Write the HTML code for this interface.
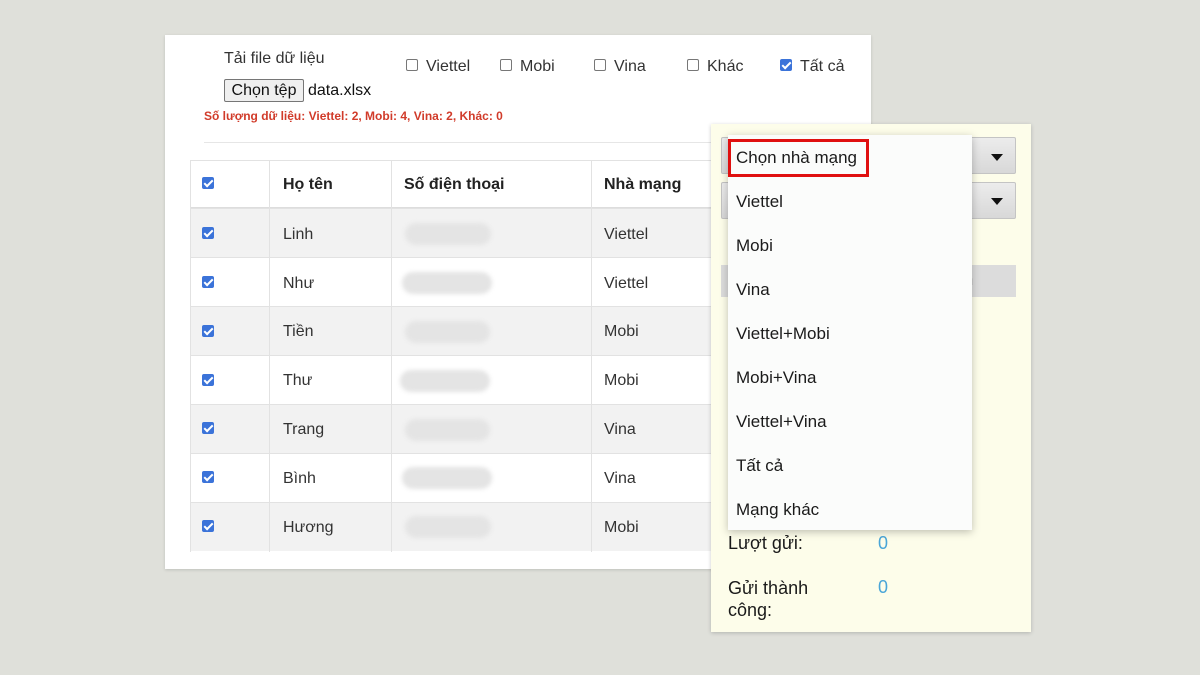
<!DOCTYPE html>
<html><head><meta charset="utf-8"><style>
*{margin:0;padding:0;box-sizing:border-box}
body{width:1200px;height:675px;background:#dfe0da;position:relative;overflow:hidden;font-family:"Liberation Sans","DejaVu Sans",sans-serif;color:#222}
.a{position:absolute}
.card{left:165px;top:35px;width:706px;height:534px;background:#fff;box-shadow:0 1px 3px rgba(0,0,0,.15)}
.t{font-size:16px;color:#333;white-space:nowrap}
.cb{width:12px;height:12px;border:1px solid #777;border-radius:2px;background:#fff}
.cbc{width:12px;height:12px;border-radius:2px;background:#3b73d9}
.cbc::after{content:"";position:absolute;left:4px;top:1px;width:3px;height:7px;border:solid #fff;border-width:0 2px 2px 0;transform:rotate(45deg)}
.row{left:190px;width:521px;height:49px;border-top:1px solid #e2e2e2}
.vl{width:1px;background:#e2e2e2;top:160px;height:392px}
.blur{height:22px;border-radius:11px;background:#e4e4e4;filter:blur(2px)}
.panel{left:711px;top:124px;width:320px;height:508px;background:#fdfdea;box-shadow:0 1px 4px rgba(0,0,0,.2)}
.sel{left:721px;width:295px;height:37px;background:linear-gradient(#ececec,#d8d8d8);border:1px solid #c4c4c4;border-radius:2px}
.arr{width:0;height:0;border-left:6px solid transparent;border-right:6px solid transparent;border-top:7px solid #111}
.menu{left:728px;top:135px;width:244px;height:395px;background:#fbfcfb;box-shadow:0 2px 8px rgba(0,0,0,.25)}
.mi{left:8px;font-size:17px;color:#1a1a1a;white-space:nowrap}
</style></head><body>
<div class="a card"></div>
<div class="a t" style="left:224px;top:50px">Tải file dữ liệu</div>
<div class="a" style="left:224px;top:79px;width:80px;height:23px;background:#efefef;border:1px solid #767676;border-radius:2px;font-size:16px;text-align:center;line-height:21px;color:#111">Chọn tệp</div>
<div class="a t" style="left:308px;top:82px;color:#111">data.xlsx</div>
<div class="a" style="left:204px;top:109px;font-size:12px;font-weight:bold;color:#d13b2a;white-space:nowrap">Số lượng dữ liệu: Viettel: 2, Mobi: 4, Vina: 2, Khác: 0</div>
<div class="a cb" style="left:406px;top:59px"></div><div class="a t" style="left:426px;top:58px">Viettel</div>
<div class="a cb" style="left:500px;top:59px"></div><div class="a t" style="left:520px;top:58px">Mobi</div>
<div class="a cb" style="left:594px;top:59px"></div><div class="a t" style="left:614px;top:58px">Vina</div>
<div class="a cb" style="left:687px;top:59px"></div><div class="a t" style="left:707px;top:58px">Khác</div>
<div class="a cbc" style="left:780px;top:59px"></div><div class="a t" style="left:800px;top:58px">Tất cả</div>
<div class="a" style="left:204px;top:142px;width:667px;height:1px;background:#e6e6e6"></div>

<div class="a row" style="top:160px;height:48px;border-bottom:1px solid #ddd"></div>
<div class="a row" style="top:208px;background:#f2f2f2"></div>
<div class="a row" style="top:257px"></div>
<div class="a row" style="top:306px;background:#f2f2f2"></div>
<div class="a row" style="top:355px"></div>
<div class="a row" style="top:404px;background:#f2f2f2"></div>
<div class="a row" style="top:453px"></div>
<div class="a row" style="top:502px;background:#f2f2f2"></div>
<div class="a vl" style="left:190px"></div><div class="a vl" style="left:269px"></div><div class="a vl" style="left:391px"></div><div class="a vl" style="left:591px"></div>
<div class="a cbc" style="left:202px;top:177px"></div>
<div class="a t" style="left:283px;top:176px;font-weight:bold;color:#222">Họ tên</div>
<div class="a t" style="left:404px;top:176px;font-weight:bold;color:#222">Số điện thoại</div>
<div class="a t" style="left:604px;top:176px;font-weight:bold;color:#222">Nhà mạng</div>

<div class="a cbc" style="left:202px;top:227px"></div><div class="a t" style="left:283px;top:226px">Linh</div><div class="a blur" style="left:405px;top:223px;width:86px"></div><div class="a t" style="left:604px;top:226px">Viettel</div>
<div class="a cbc" style="left:202px;top:276px"></div><div class="a t" style="left:283px;top:275px">Như</div><div class="a blur" style="left:402px;top:272px;width:90px"></div><div class="a t" style="left:604px;top:275px">Viettel</div>
<div class="a cbc" style="left:202px;top:325px"></div><div class="a t" style="left:283px;top:323px">Tiền</div><div class="a blur" style="left:405px;top:321px;width:85px"></div><div class="a t" style="left:604px;top:323px">Mobi</div>
<div class="a cbc" style="left:202px;top:374px"></div><div class="a t" style="left:283px;top:372px">Thư</div><div class="a blur" style="left:400px;top:370px;width:90px"></div><div class="a t" style="left:604px;top:372px">Mobi</div>
<div class="a cbc" style="left:202px;top:422px"></div><div class="a t" style="left:283px;top:421px">Trang</div><div class="a blur" style="left:405px;top:419px;width:85px"></div><div class="a t" style="left:604px;top:421px">Vina</div>
<div class="a cbc" style="left:202px;top:471px"></div><div class="a t" style="left:283px;top:470px">Bình</div><div class="a blur" style="left:402px;top:467px;width:90px"></div><div class="a t" style="left:604px;top:470px">Vina</div>
<div class="a cbc" style="left:202px;top:520px"></div><div class="a t" style="left:283px;top:519px">Hương</div><div class="a blur" style="left:405px;top:516px;width:86px"></div><div class="a t" style="left:604px;top:519px">Mobi</div>

<div class="a panel"></div>
<div class="a sel" style="top:137px"></div><div class="a arr" style="left:991px;top:154px"></div>
<div class="a sel" style="top:182px"></div><div class="a arr" style="left:991px;top:198px"></div>
<div class="a" style="left:721px;top:265px;width:295px;height:32px;background:#dcdcdc"></div>
<div class="a" style="left:960px;top:272px;font-size:16px;color:#aaa">m</div>
<div class="a" style="left:728px;top:533px;font-size:18px;color:#1a1a1a">Lượt gửi:</div>
<div class="a" style="left:878px;top:533px;font-size:18px;color:#4aa6d8">0</div>
<div class="a" style="left:728px;top:577px;font-size:18px;color:#1a1a1a;line-height:22px">Gửi thành<br>công:</div>
<div class="a" style="left:878px;top:577px;font-size:18px;color:#4aa6d8">0</div>

<div class="a menu">
<div class="a mi" style="top:13px">Chọn nhà mạng</div>
<div class="a mi" style="top:57px">Viettel</div>
<div class="a mi" style="top:101px">Mobi</div>
<div class="a mi" style="top:145px">Vina</div>
<div class="a mi" style="top:189px">Viettel+Mobi</div>
<div class="a mi" style="top:233px">Mobi+Vina</div>
<div class="a mi" style="top:277px">Viettel+Vina</div>
<div class="a mi" style="top:321px">Tất cả</div>
<div class="a mi" style="top:365px">Mạng khác</div>
</div>
<div class="a" style="left:728px;top:139px;width:141px;height:38px;border:3px solid #e01010"></div>
</body></html>
